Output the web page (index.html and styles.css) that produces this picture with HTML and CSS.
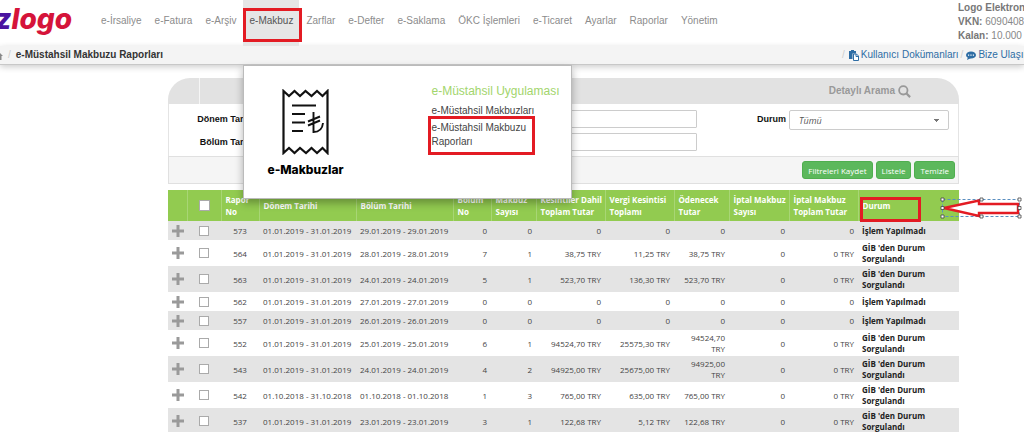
FILE: index.html
```html
<!DOCTYPE html>
<html lang="tr">
<head>
<meta charset="utf-8">
<title>e-Müstahsil Makbuzu Raporları</title>
<link rel="stylesheet" href="styles.css">
</head>
<body>
<svg class="defs" aria-hidden="true">
  <symbol id="plus" viewBox="0 0 12 12"><path d="M4.500 0h3v4.500H12v3H7.500V12h-3V7.500H0v-3h4.500z" fill="#9a9a9a"/></symbol>
</svg>
<header class="topbar">
  <a class="logo" href="#"><span class="logo-z">z</span><span class="logo-name">logo</span></a>
  <nav>
    <ul class="menu">
      <li><a href="#">e-İrsaliye</a></li>
      <li><a href="#">e-Fatura</a></li>
      <li><a href="#">e-Arşiv</a></li>
      <li class="active"><a href="#">e-Makbuz</a><span class="mark mark-nav"></span>
        <div class="popup">
          <div class="popup-art">
            <svg width="48" height="66" viewBox="0 0 48 66" fill="none" stroke="#111" stroke-width="2.500">
              <path d="M1.500 2v62l5.500-5 5.500 5 5.500-5 6 5 5.500-5 5.500 5 5.500-5 5 5V2l-5 5-5.500-5-5.500 5-6-5-5.500 5-5.500-5-5.500 5z" stroke-width="2.200"/>
              <path d="M10 16.500h24M10 25h13M10 33.500h13M10 42h11" stroke-width="2.200"/>
              <path d="M31.500 23v20c6 0 9-4 9.500-9M26 32.500l12-5M26 36.500l12-5" stroke-width="1.900"/>
            </svg>
            <strong>e-Makbuzlar</strong>
          </div>
          <div class="popup-links">
            <h2>e-Müstahsil Uygulaması</h2>
            <a href="#">e-Müstahsil Makbuzları</a>
            <a href="#" class="chosen">e-Müstahsil Makbuzu Raporları<span class="mark mark-link"></span></a>
          </div>
        </div>
      </li>
      <li><a href="#">Zarflar</a></li>
      <li><a href="#">e-Defter</a></li>
      <li><a href="#">e-Saklama</a></li>
      <li><a href="#">ÖKC İşlemleri</a></li>
      <li><a href="#">e-Ticaret</a></li>
      <li><a href="#">Ayarlar</a></li>
      <li><a href="#">Raporlar</a></li>
      <li><a href="#">Yönetim</a></li>
    </ul>
  </nav>
  <div class="account">
    <div><b>Logo Elektroni</b></div>
    <div><b>VKN:</b> 60904080</div>
    <div><b>Kalan:</b> 10.000</div>
  </div>
</header>
<div class="crumbs">
  <a class="home" href="#" aria-label="Ana sayfa"><svg width="10" height="9" viewBox="0 0 10 9"><path d="M5 0l5 5H8.500v4H6V6H4v3H1.500V5H0z" fill="#888"/></svg></a>
  <span class="slash">/</span>
  <b>e-Müstahsil Makbuzu Raporları</b>
  <div class="help">
    <span class="slash">/</span>
    <a href="#"><svg width="10" height="11" viewBox="0 0 10 11"><path d="M0 1h2V0h3v1h2v2.500H3.500V9H0z" fill="#2e6da4"/><path d="M4.500 4h3L9.500 6v4.500h-5z" fill="#fff" stroke="#2e6da4"/><path d="M7 4v2.500h2.500" fill="none" stroke="#2e6da4"/></svg>Kullanıcı Dokümanları</a>
    <span class="slash">/</span>
    <a href="#"><svg width="10" height="9" viewBox="0 0 10 9"><ellipse cx="5" cy="4" rx="5" ry="3.600" fill="#2e6da4"/><path d="M2 6l-1 3 4-2z" fill="#2e6da4"/><path d="M2 3.500h1.200v1.200H2zM4.400 3.500h1.200v1.200H4.400zM6.800 3.500H8v1.200H6.800z" fill="#fff"/></svg>Bize Ulaşın</a>
  </div>
</div>
<main>
  <form class="filter">
    <div class="filter-head">
      <span class="tab"></span>
      <span class="search">Detaylı Arama <svg width="13" height="13" viewBox="0 0 13 13" fill="none" stroke="#999"><circle cx="5.300" cy="5.300" r="4.200" stroke-width="1.800"/><path d="M8.500 8.500l3.600 3.600" stroke-width="2.200"/></svg></span>
    </div>
    <div class="filter-body">
      <label for="donem">Dönem Tarihi</label><input id="donem" type="text">
      <label for="durum">Durum</label>
      <select id="durum"><option>Tümü</option></select>
      <label for="bolum">Bölüm Tarihi</label><input id="bolum" type="text">
    </div>
    <div class="filter-foot">
      <button type="button">Filtreleri Kaydet</button>
      <button type="button">Listele</button>
      <button type="button">Temizle</button>
    </div>
  </form>
  <table>
    <colgroup><col class="w-plus"><col class="w-check"><col class="w-no"><col class="w-date"><col class="w-date"><col class="w-no"><col class="w-count"><col class="w-sum"><col class="w-sum"><col class="w-pay"><col class="w-void"><col class="w-sum"><col></colgroup>
    <thead>
      <tr><th></th><th class="c"><input type="checkbox" aria-label="Tümünü seç"></th><th>Rapor<br>No</th><th>Dönem Tarihi</th><th>Bölüm Tarihi</th><th>Bölüm<br>No</th><th>Makbuz<br>Sayısı</th><th>Kesintiler Dahil<br>Toplam Tutar</th><th>Vergi Kesintisi<br>Toplamı</th><th>Ödenecek<br>Tutar</th><th>İptal Makbuz<br>Sayısı</th><th>İptal Makbuz<br>Toplam Tutar</th>
      <th class="status-head">Durum<span class="mark mark-status"></span>
        <svg class="arrow" width="84" height="24" viewBox="0 0 84 24"><path d="M3.500 3.500h77v17h-77z" fill="none" stroke="#5b8fc0" stroke-dasharray="3 2"/><path d="M5 12L40 4.500V8h39v9H40v3z" fill="#fff" stroke="#e31b23" stroke-width="2.400"/><path d="M2 2h3v3H2zM41 2h3v3h-3zM79 2h3v3h-3zM2 10.500h3v3H2zM79 10.500h3v3h-3zM2 19h3v3H2zM41 19h3v3h-3zM79 19h3v3h-3z" fill="#fff" stroke="#444" stroke-width=".8"/></svg>
      </th></tr>
    </thead>
    <tbody>
      <tr><td class="c"><svg class="plus"><use href="#plus"/></svg></td><td class="c"><input type="checkbox" aria-label="573"></td><td class="c">573</td><td class="d">01.01.2019 - 31.01.2019</td><td class="d">29.01.2019 - 29.01.2019</td><td>0</td><td>0</td><td>0</td><td>0</td><td>0</td><td>0</td><td>0</td><td class="s">İşlem Yapılmadı</td></tr>
      <tr><td class="c"><svg class="plus"><use href="#plus"/></svg></td><td class="c"><input type="checkbox" aria-label="564"></td><td class="c">564</td><td class="d">01.01.2019 - 31.01.2019</td><td class="d">28.01.2019 - 28.01.2019</td><td>7</td><td>1</td><td>38,75 TRY</td><td>11,25 TRY</td><td>38,75 TRY</td><td>0</td><td>0 TRY</td><td class="s">GİB 'den Durum<br>Sorgulandı</td></tr>
      <tr><td class="c"><svg class="plus"><use href="#plus"/></svg></td><td class="c"><input type="checkbox" aria-label="563"></td><td class="c">563</td><td class="d">01.01.2019 - 31.01.2019</td><td class="d">24.01.2019 - 24.01.2019</td><td>5</td><td>1</td><td>523,70 TRY</td><td>136,30 TRY</td><td>523,70 TRY</td><td>0</td><td>0 TRY</td><td class="s">GİB 'den Durum<br>Sorgulandı</td></tr>
      <tr><td class="c"><svg class="plus"><use href="#plus"/></svg></td><td class="c"><input type="checkbox" aria-label="562"></td><td class="c">562</td><td class="d">01.01.2019 - 31.01.2019</td><td class="d">27.01.2019 - 27.01.2019</td><td>0</td><td>0</td><td>0</td><td>0</td><td>0</td><td>0</td><td>0</td><td class="s">İşlem Yapılmadı</td></tr>
      <tr><td class="c"><svg class="plus"><use href="#plus"/></svg></td><td class="c"><input type="checkbox" aria-label="557"></td><td class="c">557</td><td class="d">01.01.2019 - 31.01.2019</td><td class="d">26.01.2019 - 26.01.2019</td><td>0</td><td>0</td><td>0</td><td>0</td><td>0</td><td>0</td><td>0</td><td class="s">İşlem Yapılmadı</td></tr>
      <tr><td class="c"><svg class="plus"><use href="#plus"/></svg></td><td class="c"><input type="checkbox" aria-label="552"></td><td class="c">552</td><td class="d">01.01.2019 - 31.01.2019</td><td class="d">25.01.2019 - 25.01.2019</td><td>6</td><td>1</td><td>94524,70 TRY</td><td>25575,30 TRY</td><td>94524,70<br>TRY</td><td>0</td><td>0 TRY</td><td class="s">GİB 'den Durum<br>Sorgulandı</td></tr>
      <tr><td class="c"><svg class="plus"><use href="#plus"/></svg></td><td class="c"><input type="checkbox" aria-label="543"></td><td class="c">543</td><td class="d">01.01.2019 - 31.01.2019</td><td class="d">24.01.2019 - 24.01.2019</td><td>4</td><td>2</td><td>94925,00 TRY</td><td>25675,00 TRY</td><td>94925,00<br>TRY</td><td>0</td><td>0 TRY</td><td class="s">GİB 'den Durum<br>Sorgulandı</td></tr>
      <tr><td class="c"><svg class="plus"><use href="#plus"/></svg></td><td class="c"><input type="checkbox" aria-label="542"></td><td class="c">542</td><td class="d">01.10.2018 - 31.10.2018</td><td class="d">01.10.2018 - 01.10.2018</td><td>1</td><td>3</td><td>765,00 TRY</td><td>635,00 TRY</td><td>765,00 TRY</td><td>0</td><td>0 TRY</td><td class="s">GİB 'den Durum<br>Sorgulandı</td></tr>
      <tr><td class="c"><svg class="plus"><use href="#plus"/></svg></td><td class="c"><input type="checkbox" aria-label="537"></td><td class="c">537</td><td class="d">01.01.2019 - 31.01.2019</td><td class="d">23.01.2019 - 23.01.2019</td><td>3</td><td>1</td><td>122,68 TRY</td><td>5,12 TRY</td><td>122,68 TRY</td><td>0</td><td>0 TRY</td><td class="s">GİB 'den Durum<br>Sorgulandı</td></tr>
    </tbody>
  </table>
</main>
</body>
</html>
```
FILE: styles.css
```css
* { box-sizing: border-box; }
body {
  margin: 0;
  height: 100vh;
  overflow: hidden;
  background: #fff;
  color: #333;
  font: 10px/14px "Liberation Sans", Arial, sans-serif;
}
a { color: inherit; text-decoration: none; }
svg { display: block; flex: none; }
.defs { position: absolute; width: 0; height: 0; }

.topbar { display: flex; height: 46px; }
.logo {
  flex: none;
  display: flex;
  justify-content: flex-end;
  width: 72px;
  margin-right: 22px;
  font: italic 800 28px/38px Inter, sans-serif;
}
.logo-z { color: #4a14a0; }
.logo-name { color: #d5143a; }
.menu { display: flex; margin: 0; padding: 0; list-style: none; color: #8c8c8c; }
.menu > li { position: relative; height: 46px; }
.menu > li > a { display: block; padding: 14px 6px 14px 7px; white-space: nowrap; }
.menu > .active { background: #e6e6e6; color: #555; }
.account {
  width: 66px;
  margin-left: auto;
  padding-top: 1px;
  color: #888;
  white-space: nowrap;
}
.account b { color: #777; }

.mark { position: absolute; border: 3px solid #e31b23; }
.mark-nav { left: 0; top: 8px; width: 59px; height: 34px; z-index: 3; }
.mark-link { left: -4px; top: -5px; width: 107px; height: 39px; }
.mark-status { left: 1px; top: 7px; width: 61px; height: 25px; }

.popup {
  position: absolute;
  left: 0;
  top: 65px;
  z-index: 2;
  display: flex;
  width: 329px;
  height: 134px;
  padding: 17px 0 0 22px;
  background: #fff;
  border: 1px solid #bbb;
  box-shadow: 0 4px 8px rgba(0, 0, 0, .3);
  color: #444;
}
.popup-art {
  display: flex;
  flex-direction: column;
  align-items: center;
  width: 80px;
  padding-top: 6px;
}
.popup-art strong { margin-top: 7px; color: #000; font: 800 12px/16px Inter, sans-serif; }
.popup-links { margin-left: 86px; }
.popup-links h2 { margin: 0 0 5px; color: #a2d56c; font-size: 12px; font-weight: 400; line-height: 16px; white-space: nowrap; }
.popup-links a { display: block; position: relative; width: 110px; margin-bottom: 3px; white-space: nowrap; }
.popup-links .chosen { width: 100px; white-space: normal; }

.crumbs {
  display: flex;
  align-items: center;
  height: 19px;
  background: #f4f4f4;
  border-bottom: 1px solid #c8c8c8;
  box-shadow: 0 2px 6px rgba(0, 0, 0, .2);
  white-space: nowrap;
}
.home { width: 3px; overflow: hidden; }
.home svg { margin-left: -7px; }
.slash { margin: 0 5px; color: #ccc; }
.help { display: flex; width: 184px; margin-left: auto; color: #2e6da4; }
.help .slash { margin: 0 3px 0 2px; }
.help .slash:first-child { margin-right: 4px; }
.help a { display: flex; align-items: center; gap: 2px; }

main { padding: 13px 65px 0 168px; }
.filter { margin-bottom: 6px; }
.filter-head {
  display: flex;
  align-items: center;
  height: 26px;
  overflow: hidden;
  background: #e2e2e2;
  border-radius: 22px 22px 0 0;
}
.tab { align-self: stretch; width: 32px; border-right: 1px solid #f6f6f6; }
.search { display: flex; align-items: center; gap: 3px; margin: 0 48px 0 auto; color: #999; font-weight: 700; }
.filter-body {
  display: grid;
  grid-template-columns: 85px 1fr 86px 160px;
  column-gap: 3px;
  row-gap: 5px;
  align-items: center;
  padding: 6px 9px 5px 0;
  border: 1px solid #e4e4e4;
  border-width: 0 1px;
}
.filter-body label { color: #111; font-size: 9px; font-weight: 700; text-align: right; white-space: nowrap; }
.filter-body input { width: 100%; height: 18px; border: 1px solid #ccc; border-radius: 1px; }
.filter-body select {
  appearance: none;
  width: 100%;
  height: 20px;
  margin-bottom: -2px;
  padding: 0 9px;
  border: 1px solid #ccc;
  border-radius: 2px;
  background: linear-gradient(#777, #777) 144px 8px / 5px 1px no-repeat, linear-gradient(#777, #777) 145px 9px / 3px 1px no-repeat, linear-gradient(#777, #777) 146px 10px / 1px 1px no-repeat, #fff;
  color: #555;
  font: italic 9px "Open Sans", sans-serif;
}
.filter-foot {
  display: flex;
  justify-content: flex-end;
  gap: 3px;
  padding: 4px 3px 4px 0;
  background: #f5f5f5;
  border: 1px solid #e0e0e0;
}
.filter-foot button {
  height: 18px;
  padding: 0 5px;
  border: 1px solid #4fae4f;
  border-radius: 3px;
  background: #5cb85c;
  color: #fff;
  font: 8px "Open Sans", sans-serif;
}

table { width: 100%; table-layout: fixed; border-collapse: collapse; font: 8px/11px "Open Sans", sans-serif; color: #444; }
.w-plus { width: 19px; }
.w-check { width: 34px; }
.w-no { width: 38px; }
.w-date { width: 97px; }
.w-count { width: 45px; }
.w-sum { width: 69px; }
.w-pay { width: 55px; }
.w-void { width: 60px; }
th {
  height: 31px;
  padding: 0 0 0 4px;
  overflow: hidden;
  border-left: 1px solid #a8d675;
  background: #92cb50;
  color: #fff;
  font-weight: 700;
  line-height: 12px;
  text-align: left;
  white-space: nowrap;
}
th:first-child { border-left: 0; }
td { height: 19px; padding: 2px 4px 2px 0; text-align: right; white-space: nowrap; }
th.c, td.c { padding: 0; text-align: center; }
td.d { padding-left: 4px; text-align: left; }
td.s { padding-left: 4px; color: #222; font-weight: 700; text-align: left; }
tbody tr:nth-child(odd) { background: #e4e4e4; }
.plus { width: 12px; height: 12px; margin: 0 auto; }
table input {
  display: block;
  appearance: none;
  width: 10px;
  height: 10px;
  margin: 0 auto;
  border: 1px solid #aaa;
  background: #fff;
}
th input { width: 11px; height: 11px; }
.status-head { position: relative; overflow: visible; }
.arrow { position: absolute; left: 80px; top: 6px; }
```
